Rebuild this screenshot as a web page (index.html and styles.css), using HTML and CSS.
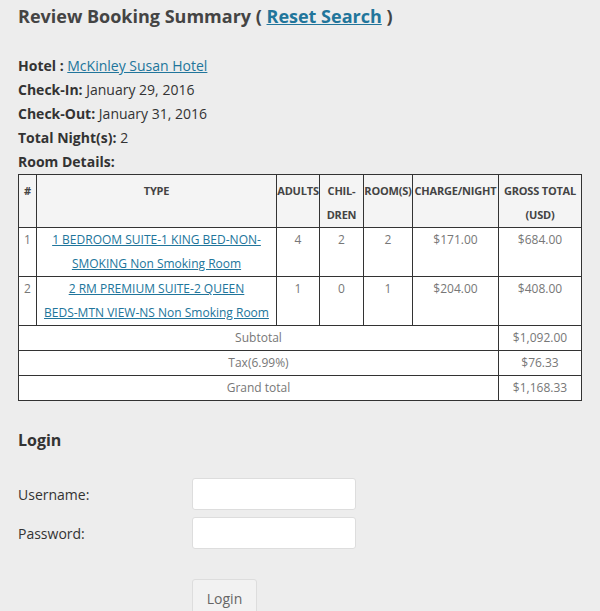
FILE: index.html
```html
<!DOCTYPE html>
<html>
<head>
<meta charset="utf-8">
<link rel="stylesheet" href="styles.css">
</head>
<body>
<div class="page">
  <h2 class="title">Review Booking Summary ( <a href="#" class="reset">Reset Search</a> )</h2>
  <div class="info">
    <div><b>Hotel :</b> <a href="#">McKinley Susan Hotel</a></div>
    <div><b>Check-In:</b> January 29, 2016</div>
    <div><b>Check-Out:</b> January 31, 2016</div>
    <div><b>Total Night(s):</b> 2</div>
    <div><b>Room Details:</b></div>
  </div>
  <table class="rooms">
    <colgroup>
      <col class="c-num"><col class="c-type"><col class="c-adults"><col class="c-child"><col class="c-rooms"><col class="c-charge"><col class="c-gross">
    </colgroup>
    <thead>
      <tr>
        <th>#</th><th>TYPE</th><th>ADULTS</th><th>CHIL-<br>DREN</th><th>ROOM(S)</th><th>CHARGE/NIGHT</th><th>GROSS TOTAL<br>(USD)</th>
      </tr>
    </thead>
    <tbody>
      <tr>
        <td>1</td>
        <td class="type"><a href="#">1 BEDROOM SUITE-1 KING BED-NON-SMOKING Non Smoking Room</a></td>
        <td>4</td><td>2</td><td>2</td><td>$171.00</td><td>$684.00</td>
      </tr>
      <tr>
        <td>2</td>
        <td class="type"><a href="#">2 RM PREMIUM SUITE-2 QUEEN <span class="nowrap">BEDS-MTN</span> VIEW-NS Non Smoking Room</a></td>
        <td>1</td><td>0</td><td>1</td><td>$204.00</td><td>$408.00</td>
      </tr>
      <tr class="sum"><td colspan="6">Subtotal</td><td>$1,092.00</td></tr>
      <tr class="sum"><td colspan="6">Tax(6.99%)</td><td>$76.33</td></tr>
      <tr class="sum"><td colspan="6">Grand total</td><td>$1,168.33</td></tr>
    </tbody>
  </table>

  <h3 class="login-title">Login</h3>
  <form class="login">
    <label for="u">Username:</label><input id="u" type="text">
    <label for="p">Password:</label><input id="p" type="password">
    <span></span><button type="button">Login</button>
  </form>
</div>
</body>
</html>
```
FILE: styles.css
```css
html, body {
  margin: 0;
  padding: 0;
  background: #ededed;
}
body {
  font-family: "Open Sans", "Noto Sans", sans-serif;
  color: #333;
}
.page {
  padding: 0 18px;
}
a {
  color: #21759b;
  text-decoration: underline;
}
.title {
  margin: 0;
  font-size: 18px;
  line-height: 32px;
  font-weight: 700;
  color: #444;
}
.title .reset {
  font-weight: 700;
}
.info {
  margin-top: 22px;
  font-size: 14px;
  line-height: 24px;
  color: #333;
}
.info b {
  font-weight: 700;
}
.rooms {
  width: 563px;
  border-collapse: collapse;
  table-layout: fixed;
  background: #fff;
  font-size: 12px;
  line-height: 24px;
  color: #777;
}
.c-num { width: 18px; }
.c-type { width: 240px; }
.c-adults { width: 43px; }
.c-child { width: 44px; }
.c-rooms { width: 49px; }
.c-charge { width: 86px; }
.c-gross { width: 83px; }
.rooms th, .rooms td {
  border: 1px solid #333;
  text-align: center;
  vertical-align: top;
  padding: 0;
}
.rooms th {
  background: #f4f4f4;
  color: #444;
  font-size: 11px;
  font-weight: 700;
  padding-top: 4px;
  height: 48px;
  white-space: nowrap;
  overflow: visible;
  letter-spacing: -0.2px;
}
.rooms td.type {
  padding: 0 2px;
}
.nowrap {
  white-space: nowrap;
}
.login-title {
  margin: 27px 0 0;
  font-size: 16px;
  line-height: 24px;
  font-weight: 700;
  color: #333;
}
.login {
  margin-top: 26px;
  display: grid;
  grid-template-columns: 174px 164px;
  row-gap: 7px;
  align-items: center;
  font-size: 14px;
  color: #333;
}
.login input {
  box-sizing: border-box;
  height: 32px;
  width: 164px;
  border: 1px solid #ddd;
  border-radius: 3px;
  background: #fff;
  margin: 0;
}
.login button {
  grid-column: 2;
  justify-self: start;
  margin-top: 23px;
  width: 65px;
  height: 40px;
  box-sizing: border-box;
  border: 1px solid #ddd;
  border-radius: 3px;
  background: #f2f2f2;
  color: #666;
  font-family: "Open Sans", sans-serif;
  font-size: 14px;
  padding: 0;
  text-align: center;
  vertical-align: top;
  line-height: 24px;
}
.login span { grid-column: 1; }
```
